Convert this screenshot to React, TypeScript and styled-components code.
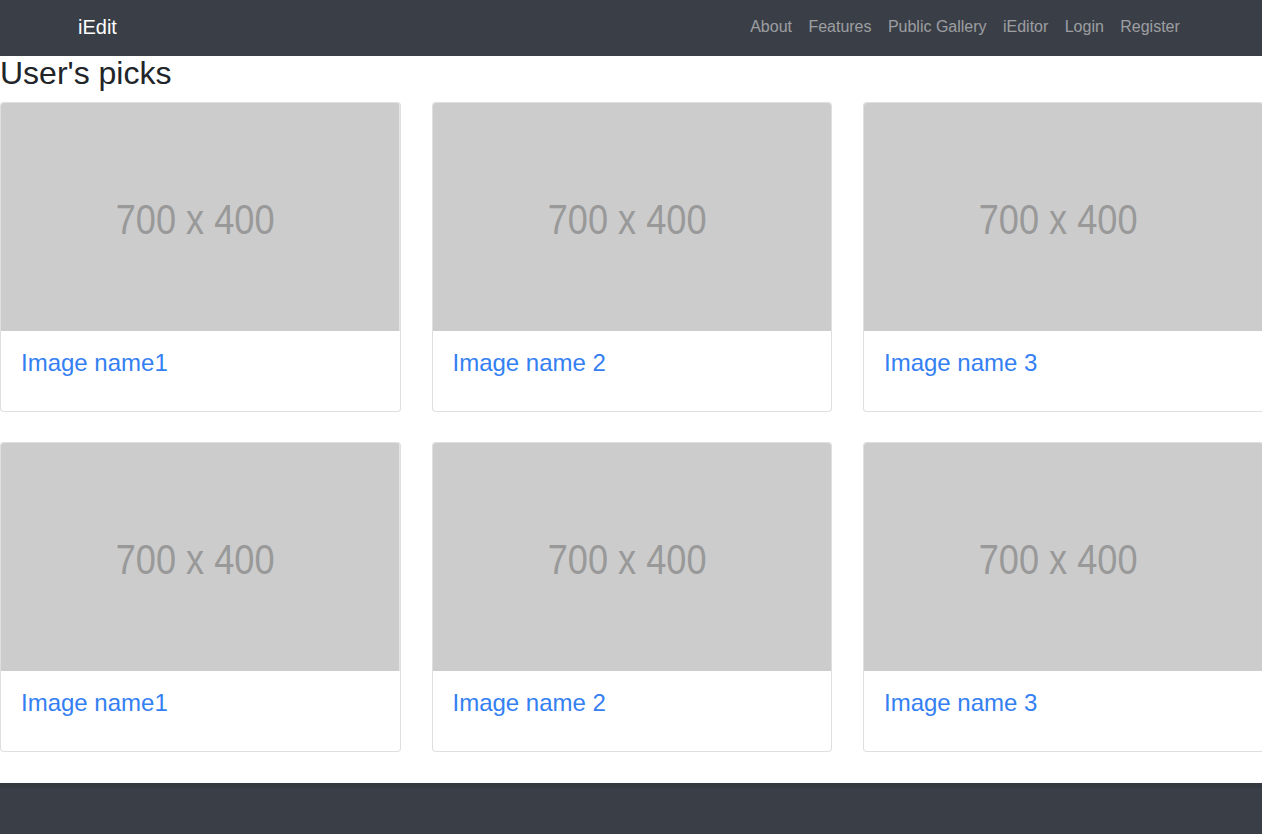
import React from "react";
import styled, { createGlobalStyle } from "styled-components";

const GlobalStyle = createGlobalStyle`
  html, body {
    margin: 0;
    padding: 0;
    overflow-x: hidden;
    background: #ffffff;
    font-family: "Liberation Sans", Arial, Helvetica, sans-serif;
    color: #212529;
  }
  * { box-sizing: border-box; }
`;

const NavBar = styled.nav`
  height: 56px;
  background: #3a3e46;
  display: flex;
  align-items: center;
  padding-bottom: 2px;
`;

const NavContainer = styled.div`
  width: 1140px;
  margin: 0 auto;
  padding: 0 13px 0 17px;
  display: flex;
  align-items: center;
  justify-content: space-between;
`;

const Brand = styled.a`
  color: #ffffff;
  font-size: 20px;
  line-height: 30px;
  text-decoration: none;
  padding: 5px 0;
`;

const NavList = styled.ul`
  display: flex;
  list-style: none;
  margin: 0;
  padding: 0;
`;

const NavLink = styled.a`
  display: block;
  padding: 8px 8.2px;
  font-size: 16px;
  line-height: 24px;
  color: rgba(255, 255, 255, 0.5);
  text-decoration: none;
`;

const Title = styled.h2`
  margin: -2px 0 10px;
  font-size: 32px;
  font-weight: 400;
  line-height: 38.4px;
  color: #212529;
`;

const Grid = styled.div`
  display: grid;
  grid-template-columns: repeat(3, 400.5px);
  column-gap: 31px;
  row-gap: 30px;
  padding-bottom: 31px;
`;

const Card = styled.div`
  border: 1px solid rgba(0, 0, 0, 0.125);
  border-radius: 4px;
  overflow: hidden;
  background: #ffffff;
`;

const Placeholder = styled.svg`
  display: block;
  width: 100%;
  height: 228px;
`;

const CardBody = styled.div`
  padding: 18px 20px 21px;
`;

const CardTitle = styled.h4`
  margin: 0 0 12px;
  font-size: 24px;
  font-weight: 400;
  line-height: 28.8px;
`;

const CardLink = styled.a`
  color: #3480f2;
  text-decoration: none;
`;

const Footer = styled.footer`
  height: 60px;
  background: #3a3e46;
  border-top: 5px solid #353940;
`;

const names = ["Image name1", "Image name 2", "Image name 3"];
const rows = [names, names].flat();

const PlaceholderImage = () => (
  <Placeholder viewBox="0 0 700 400" preserveAspectRatio="none">
    <rect width="700" height="400" fill="#cccccc" />
    <text
      x="341"
      y="230"
      textAnchor="middle"
      fontFamily="'Liberation Sans Narrow', 'Liberation Sans', Arial, sans-serif"
      fontSize="76"
      fill="#999999"
      textLength="279"
      lengthAdjust="spacingAndGlyphs"
    >
      700 x 400
    </text>
  </Placeholder>
);

export default function App() {
  return (
    <>
      <GlobalStyle />
      <NavBar>
        <NavContainer>
          <Brand href="#">iEdit</Brand>
          <NavList>
            {["About", "Features", "Public Gallery", "iEditor", "Login", "Register"].map((l) => (
              <li key={l}>
                <NavLink href="#">{l}</NavLink>
              </li>
            ))}
          </NavList>
        </NavContainer>
      </NavBar>
      <main>
        <Title>User's picks</Title>
        <Grid>
          {rows.map((n, i) => (
            <Card key={i}>
              <PlaceholderImage />
              <CardBody>
                <CardTitle>
                  <CardLink href="#">{n}</CardLink>
                </CardTitle>
              </CardBody>
            </Card>
          ))}
        </Grid>
      </main>
      <Footer />
    </>
  );
}
